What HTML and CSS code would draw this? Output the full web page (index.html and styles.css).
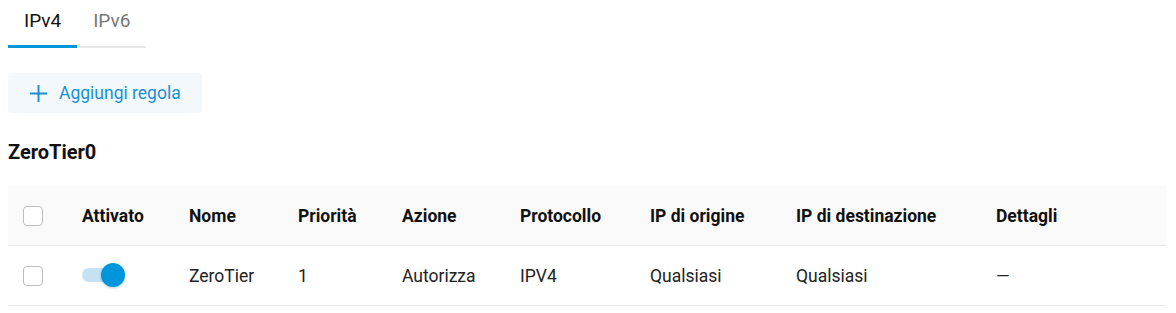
FILE: index.html
```html
<!DOCTYPE html>
<html lang="it">
<head>
  <meta charset="UTF-8" />
  <meta name="viewport" content="width=device-width, initial-scale=1.0" />
  <title>Regole firewall</title>
  <link rel="stylesheet" href="styles.css">
</head>
<body>
  <div class="page">
    <div class="tabs">
      <div class="tab active">IPv4</div>
      <div class="tab">IPv6</div>
    </div>

    <div class="toolbar">
      <button class="add-btn">
        <svg class="plus" viewBox="0 0 20 20" width="19" height="19">
          <path d="M10 1v18M1 10h18" stroke="currentColor" stroke-width="2" fill="none"/>
        </svg>
        Aggiungi regola
      </button>
    </div>

    <h3 class="section-title">ZeroTier0</h3>

    <table class="rules">
      <colgroup>
        <col style="width:58px">
        <col style="width:107px">
        <col style="width:109px">
        <col style="width:104px">
        <col style="width:118px">
        <col style="width:130px">
        <col style="width:146px">
        <col style="width:200px">
        <col>
      </colgroup>
      <thead>
        <tr>
          <th class="sel"><span class="checkbox"></span></th>
          <th>Attivato</th>
          <th>Nome</th>
          <th>Priorità</th>
          <th>Azione</th>
          <th>Protocollo</th>
          <th>IP di origine</th>
          <th>IP di destinazione</th>
          <th>Dettagli</th>
        </tr>
      </thead>
      <tbody>
        <tr>
          <td class="sel"><span class="checkbox"></span></td>
          <td><span class="switch on"><span class="thumb"></span></span></td>
          <td>ZeroTier</td>
          <td>1</td>
          <td>Autorizza</td>
          <td>IPV4</td>
          <td>Qualsiasi</td>
          <td>Qualsiasi</td>
          <td>—</td>
        </tr>
      </tbody>
    </table>
  </div>
</body>
</html>
```

FILE: styles.css
```css
body {
  margin: 0;
  background: #fff;
  font-family: Roboto, "Liberation Sans", sans-serif;
  font-size: 17.5px;
  color: #1a1a1a;
}

.page {
  padding: 0 10px 0 8px;
}

.tabs {
  display: inline-flex;
  box-shadow: inset 0 -2px 0 #e8e8e8;
}

.tab {
  padding: 10px 16px 0;
  height: 35px;
  font-size: 19px;
  line-height: 22px;
  color: #777;
  border-bottom: 3px solid transparent;
  cursor: pointer;
}

.tab.active {
  color: #111;
  border-bottom-color: #0096dc;
}

.toolbar {
  margin-top: 25px;
}

.add-btn {
  display: inline-flex;
  align-items: center;
  gap: 11px;
  height: 40px;
  width: 194px;
  padding: 0 0 0 21px;
  border: none;
  border-radius: 4px;
  background: #f2f8fc;
  color: #1a8fd6;
  font-family: inherit;
  font-size: 17.5px;
  cursor: pointer;
}

.section-title {
  margin: 28px 0 22px;
  font-size: 20px;
  line-height: 23px;
  font-weight: 700;
  color: #111;
}

.rules {
  width: 100%;
  border-collapse: collapse;
  table-layout: fixed;
}

.rules th,
.rules td {
  height: 59px;
  padding: 0 0 0 16px;
  text-align: left;
  border-bottom: 1px solid #e8e8e8;
  white-space: nowrap;
}

.rules th {
  background: #fafafa;
  font-weight: 700;
  color: #111;
}

.rules td {
  color: #222;
}

.rules .sel {
  padding-left: 15px;
}

.checkbox {
  display: block;
  width: 18px;
  height: 18px;
  border: 1px solid #bdbdbd;
  border-radius: 4px;
  background: #fff;
}

.switch {
  position: relative;
  display: block;
  width: 38px;
  height: 14px;
  margin-top: -1px;
  border-radius: 7px;
  background: #c5e2f5;
}

.switch .thumb {
  position: absolute;
  top: -5px;
  left: 19px;
  width: 24px;
  height: 24px;
  border-radius: 50%;
  background: #0096dc;
  box-shadow: 0 1px 3px rgba(0, 80, 140, 0.3);
}
```
